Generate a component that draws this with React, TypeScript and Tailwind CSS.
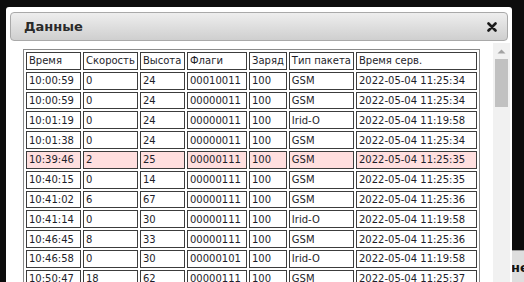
const columns = [
  { title: 'Время', width: 'w-[55px]' },
  { title: 'Скорость', width: 'w-[55px]' },
  { title: 'Высота', width: 'w-[45px]' },
  { title: 'Флаги', width: 'w-[60px]' },
  { title: 'Заряд', width: 'w-[37px]' },
  { title: 'Тип пакета', width: 'w-[65px]' },
  { title: 'Время серв.', width: 'w-[121px]' },
]

const rows = [
  ['10:00:59', '0', '24', '00010011', '100', 'GSM', '2022-05-04 11:25:34'],
  ['10:00:59', '0', '24', '00000011', '100', 'GSM', '2022-05-04 11:25:34'],
  ['10:01:19', '0', '24', '00000011', '100', 'Irid-O', '2022-05-04 11:19:58'],
  ['10:01:38', '0', '24', '00000011', '100', 'GSM', '2022-05-04 11:25:34'],
  ['10:39:46', '2', '25', '00000111', '100', 'GSM', '2022-05-04 11:25:35'],
  ['10:40:15', '0', '14', '00000111', '100', 'GSM', '2022-05-04 11:25:35'],
  ['10:41:02', '6', '67', '00000111', '100', 'GSM', '2022-05-04 11:25:36'],
  ['10:41:14', '0', '30', '00000111', '100', 'Irid-O', '2022-05-04 11:19:58'],
  ['10:46:45', '8', '33', '00000111', '100', 'GSM', '2022-05-04 11:25:36'],
  ['10:46:58', '0', '30', '00000101', '100', 'Irid-O', '2022-05-04 11:19:58'],
  ['10:50:47', '18', '62', '00000111', '100', 'GSM', '2022-05-04 11:25:37'],
]

const highlighted = 4

export default function App() {
  return (
    <div className="relative w-[524px] h-[282px] overflow-hidden bg-[#0c0c0c] font-['DejaVu_Sans',sans-serif]">
      {/* button behind the dialog */}
      <div className="absolute left-[500px] top-[250px] w-[60px] h-[40px] bg-[#dedede] border border-[#9a9a9a] pl-[10px] pt-[7px] text-[13px] font-bold text-[#111]">
        не
      </div>

      {/* Dialog */}
      <div className="absolute left-[6px] top-[7px] w-[506px] h-[300px] bg-white rounded-t-[3px] flex flex-col">
        <div className="mx-[4px] mt-[5px] h-[29px] rounded-[4px] border border-[#a9a9a9] bg-gradient-to-b from-[#eeeeee] to-[#cfcfcf] flex items-center justify-between pl-[13px] pr-[10px]">
          <span className="text-[13px] font-bold text-[#2a2a2a]">Данные</span>
          <svg width="10" height="10" viewBox="0 0 10 10" className="text-[#1a1a1a]">
            <path d="M1.5 1.5L8.5 8.5M8.5 1.5L1.5 8.5" stroke="currentColor" strokeWidth="2.6" strokeLinecap="round" />
          </svg>
        </div>

        <div className="flex flex-1 mt-[2px]">
          <div className="flex-1 pl-[17px] pt-[6px]">
            <table className="table-fixed border-separate border-spacing-[2px] border border-[#8a8a8a] text-[10px] text-[#1e1e2a]">
              <thead>
                <tr>
                  {columns.map((c) => (
                    <th
                      key={c.title}
                      className={`${c.width} h-[17.8px] border border-[#3c3c3c] px-[2px] text-left font-normal whitespace-nowrap`}
                    >
                      {c.title}
                    </th>
                  ))}
                </tr>
              </thead>
              <tbody>
                {rows.map((r, i) => (
                  <tr key={i} className={i === highlighted ? 'bg-[#ffdfdf]' : ''}>
                    {r.map((v, j) => (
                      <td key={j} className="h-[17.8px] border border-[#3c3c3c] px-[2px] whitespace-nowrap">
                        {v}
                      </td>
                    ))}
                  </tr>
                ))}
              </tbody>
            </table>
          </div>

          {/* Scrollbar */}
          <div className="w-[17px] mr-[2px] bg-[#f1f1f1] flex flex-col items-center">
            <svg width="9" height="5" viewBox="0 0 9 5" className="mt-[6px]">
              <path d="M0.5 4.5L4.5 0.5L8.5 4.5Z" fill="#a3a3a3" />
            </svg>
            <div className="mt-[5px] w-[13px] h-[48px] bg-[#c1c1c1]" />
          </div>
        </div>
      </div>
    </div>
  )
}
